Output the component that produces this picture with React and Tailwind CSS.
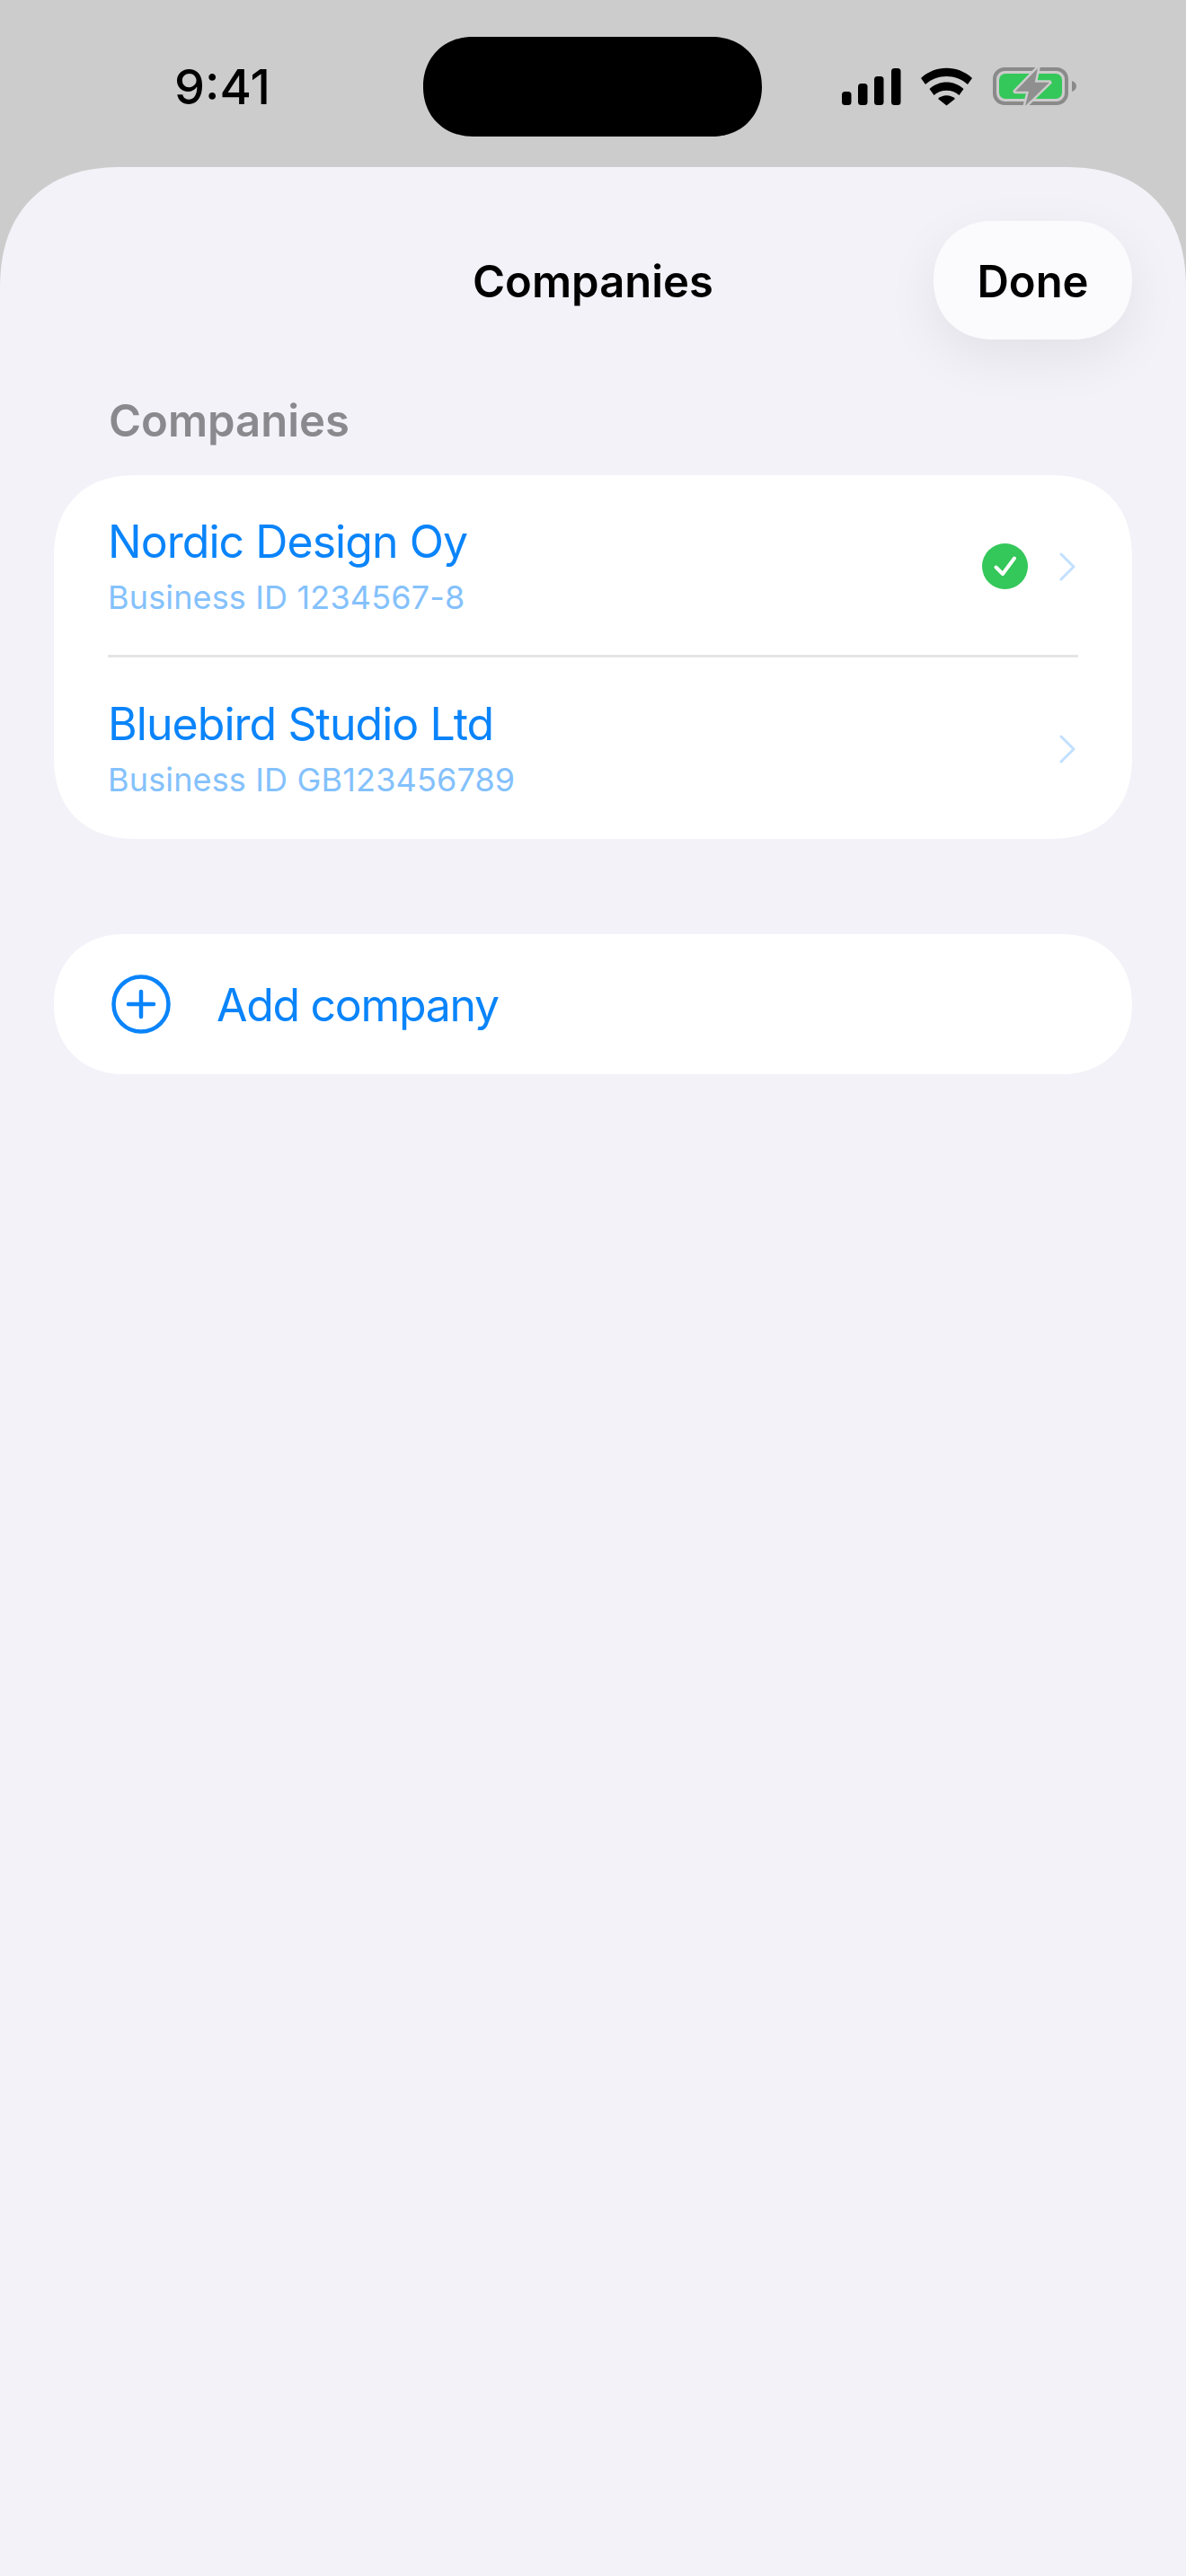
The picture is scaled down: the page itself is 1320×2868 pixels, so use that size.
const font = "font-['Inter','Noto_Sans',sans-serif]"

function StatusIcons() {
  return (
    <svg width="264" height="48" viewBox="0 0 264 48" fill="none">
      {/* signal */}
      <rect x="2" y="27" width="10.5" height="15" rx="3.5" fill="#000" />
      <rect x="20" y="18" width="10.5" height="24" rx="3.5" fill="#000" />
      <rect x="38" y="10" width="10.5" height="32" rx="3.5" fill="#000" />
      <rect x="57" y="1" width="10.5" height="41" rx="3.5" fill="#000" />
      {/* wifi */}
      <path d="M90 12 C106 -3 131 -3 147 12 L142 19 C129 7 108 7 95 19 Z" fill="#000" />
      <path d="M99.5 24 C110 14 127 14 137.5 24 L132.5 31 C125 24 112 24 104.5 31 Z" fill="#000" />
      <path d="M109 35 C114 30 123 30 128 35 L118.500 42.500 Z" fill="#000" />
      {/* battery */}
      <rect x="172" y="2" width="80" height="38" rx="11" stroke="#8a8a8a" strokeWidth="4" />
      <rect x="177" y="7" width="70" height="28" rx="7" fill="#34c759" />
      <path d="M258 15 C261 16 263 18 263 21 C263 24 261 26 258 27 Z" fill="#8a8a8a" />
      <path d="M220 1 L195 26.700 L210 26.700 L206 43 L233 16.700 L216.700 16.700 Z" fill="#cccccc" stroke="#cccccc" strokeWidth="5" strokeLinejoin="round" />
      <path d="M220 1 L195 26.700 L210 26.700 L206 43 L233 16.700 L216.700 16.700 Z" fill="#8f8f8f" />
    </svg>
  )
}

function Row({ name, sub, active }) {
  return (
    <div className="flex h-[200px] items-center pt-[3px]">
      <div className="flex-1">
        <div className="text-[50px] leading-[60px] tracking-[-0.95px] text-[#0a84fa]">{name}</div>
        <div className="mt-[9px] text-[36px] leading-[46px] tracking-[0.15px] text-[#84c1fc]">{sub}</div>
      </div>
      {active && (
        <svg className="mr-[35px]" width="51" height="51" viewBox="0 0 51 51" fill="none">
          <circle cx="25.500" cy="25.500" r="25.500" fill="#34c759" />
          <path d="M15.500 26.500 L23 34 L36 16.500" stroke="#fff" strokeWidth="4" strokeLinecap="round" strokeLinejoin="round" />
        </svg>
      )}
      <svg className="mr-[3px]" width="18" height="32" viewBox="0 0 18 32" fill="none">
        <path d="M2 2 L16 16 L2 30" stroke="#c2e0ff" strokeWidth="3" strokeLinecap="round" strokeLinejoin="round" />
      </svg>
    </div>
  )
}

export default function App() {
  return (
    <div className={`h-[2868px] w-[1320px] overflow-hidden bg-[#cccccc] ${font}`}>
      {/* status bar */}
      <div className="flex h-[186px] items-start">
        <div className="w-[471px] pl-[194px] pt-[66px] text-[54px] font-medium leading-[62px] text-black">9:41</div>
        <div className="mt-[41px] h-[111px] w-[377px] rounded-[56px] bg-black [corner-shape:superellipse(1.08)]" />
        <div className="pl-[87px] pt-[75px]">
          <StatusIcons />
        </div>
      </div>

      {/* sheet */}
      <div className="h-[2682px] rounded-t-[135px] bg-[#f2f2f8] px-[60px] [corner-shape:superellipse(1.2)]">
        <div className="grid grid-cols-[1fr_auto_1fr] items-center pt-[60px]">
          <div />
          <div className="pt-[4px] text-[49px] font-semibold leading-[58px] text-black">Companies</div>
          <div className="flex justify-end">
            <div className="flex h-[132px] w-[221px] items-center justify-center rounded-[66px] bg-[#fbfbfe] pt-[3px] text-[49px] font-semibold text-black shadow-[0_20px_60px_rgba(0,0,0,0.07)] [corner-shape:superellipse(1.1)]">
              Done
            </div>
          </div>
        </div>

        <div className="pl-[61px] pt-[62px] text-[49px] font-semibold leading-[58px] text-[#8a8a8e]">Companies</div>

        <div className="mt-[31px] rounded-[92px] bg-white px-[60px] pb-[2px] [corner-shape:superellipse(1.2)]">
          <Row name="Nordic Design Oy" sub="Business ID 1234567-8" active />
          <div className="h-[3px] bg-[#e5e5e8]" />
          <Row name="Bluebird Studio Ltd" sub="Business ID GB123456789" />
        </div>

        <div className="mt-[106px] flex h-[156px] items-center rounded-[78px] bg-white pl-[64px] [corner-shape:superellipse(1.1)]">
          <svg width="66" height="66" viewBox="0 0 66 66" fill="none">
            <circle cx="33" cy="33" r="30.500" stroke="#0a84fa" strokeWidth="4.500" />
            <path d="M33 19 V47 M19 33 H47" stroke="#0a84fa" strokeWidth="4.500" strokeLinecap="round" />
          </svg>
          <div className="pl-[51px] pt-[3px] text-[50px] tracking-[-1.3px] text-[#0a84fa]">Add company</div>
        </div>
      </div>
    </div>
  )
}
